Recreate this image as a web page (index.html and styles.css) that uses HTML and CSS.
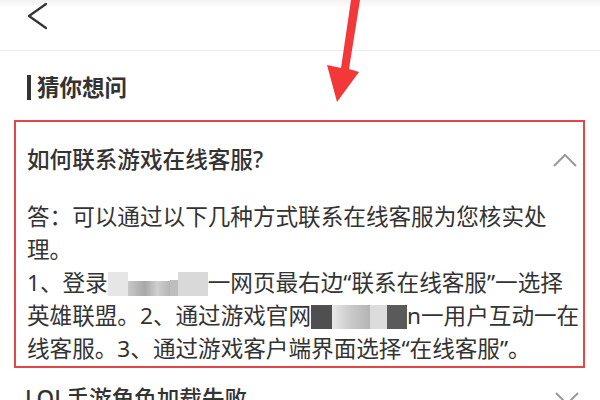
FILE: index.html
```html
<!DOCTYPE html>
<html lang="zh-CN">
<head>
<meta charset="utf-8">
<link rel="stylesheet" href="styles.css">
</head>
<body>
<div class="page">
  <header class="topbar">
    <svg class="back" width="22" height="28" viewBox="0 0 22 28"><polyline points="19,2 2,14 19,26" fill="none" stroke="#333" stroke-width="2.2" stroke-linecap="round" stroke-linejoin="round"/></svg>
  </header>
  <section class="faq">
    <h2 class="faq-title">猜你想问</h2>
    <div class="item item-open">
      <div class="item-head">
        <span class="q">如何联系游戏在线客服?</span>
        <svg class="chev" width="24" height="14" viewBox="0 0 24 14"><polyline points="1,13 12,2 23,13" fill="none" stroke="#9a9a9a" stroke-width="2"/></svg>
      </div>
      <div class="answer">
        <div class="line">答：可以通过以下几种方式联系在线客服为您核实处</div>
        <div class="line">理。</div>
        <div class="line">1、登录<span class="blur blur-a"><i class="b1"></i><i class="b2"></i><i class="b3"></i><i class="b4"></i></span>一网页最右边“联系在线客服”一选择</div>
        <div class="line">英雄联盟。2、通过游戏官网<span class="blur blur-b"><i class="d1"></i><i class="m1"></i><i class="m2"></i><i class="d2"></i></span>n一用户互动一在</div>
        <div class="line">线客服。3、通过游戏客户端界面选择“在线客服”。</div>
      </div>
    </div>
    <div class="item item-next">
      <div class="item-head">
        <span class="q">LOL手游角色加载失败</span>
        <svg class="chev" width="24" height="14" viewBox="0 0 24 14"><polyline points="1,1 12,12 23,1" fill="none" stroke="#9a9a9a" stroke-width="2"/></svg>
      </div>
    </div>
  </section>
  <svg class="arrow" width="600" height="110" viewBox="0 0 600 110"><path d="M351,0 L360,0 L349,69 L359,72 L337,102 L327,65 L341,68 Z" fill="#f23838"/></svg>
</div>
</body>
</html>
```
FILE: styles.css
```css
* { box-sizing: border-box; margin: 0; padding: 0; }
html, body { width: 600px; height: 400px; overflow: hidden; background: #fff; }
body { font-family: "Noto Sans", "Noto Sans CJK SC", sans-serif; color: #333; }
.page { position: relative; width: 600px; height: 400px; overflow: hidden; }

.topbar {
  height: 51px;
  border-bottom: 1px solid #ececec;
  background: linear-gradient(#f3f3f3 0, #fff 8px);
  padding: 2px 0 0 27px;
}
.back { display: block; }

.faq { padding: 24px 15px 0 14px; }
.faq-title {
  display: flex;
  align-items: center;
  height: 25px;
  margin-left: 13px;
  font-size: 22.5px;
  font-weight: 700;
  line-height: 25px;
  color: #333;
}
.faq-title::before {
  content: "";
  width: 4px;
  height: 25px;
  background: #333;
  margin-right: 6px;
}

.item { padding: 0 6px 0 11px; }
.item-open {
  margin-top: 20px;
  border: 2px solid #e64545;
  padding-bottom: 1px;
}
.item-head {
  display: flex;
  align-items: center;
  justify-content: space-between;
  padding: 21px 0;
  line-height: 34px;
  font-size: 22.6px;
  font-weight: 500;
}
.chev { display: block; }
.answer { margin-top: 2px; font-size: 22.6px; line-height: 33px; color: #333; }
.line { white-space: nowrap; }

.blur { display: inline-block; position: relative; vertical-align: -5px; height: 24px; }
.blur i { position: absolute; top: 0; height: 100%; display: block; }
.blur-a { width: 100px; }
.blur-a .b1 { left: 0; width: 20px; background: #e6e6e6; }
.blur-a .b2 { left: 20px; width: 42px; top: 9px; height: 15px; background: linear-gradient(90deg, #c8c8c8, #a8a8a8 40%, #cfcfcf 70%, #b5b5b5); }
.blur-a .b3 { left: 62px; width: 8px; top: 8px; height: 16px; background: #bdbdbd; }
.blur-a .b4 { left: 70px; width: 30px; background: #d9d9d9; }
.blur-b { width: 96px; }
.blur-b .d1 { left: 0; width: 21px; background: #4f4f4f; }
.blur-b .m1 { left: 21px; width: 38px; background: linear-gradient(90deg, #e8e8e8, #c9c9c9 50%, #b4b4b4); }
.blur-b .m2 { left: 59px; width: 17px; background: #dcdcdc; }
.blur-b .d2 { left: 76px; width: 20px; background: #5a5a5a; }

.item-next .item-head { padding-top: 14px; }

.arrow { position: absolute; left: 0; top: 0; }
```
